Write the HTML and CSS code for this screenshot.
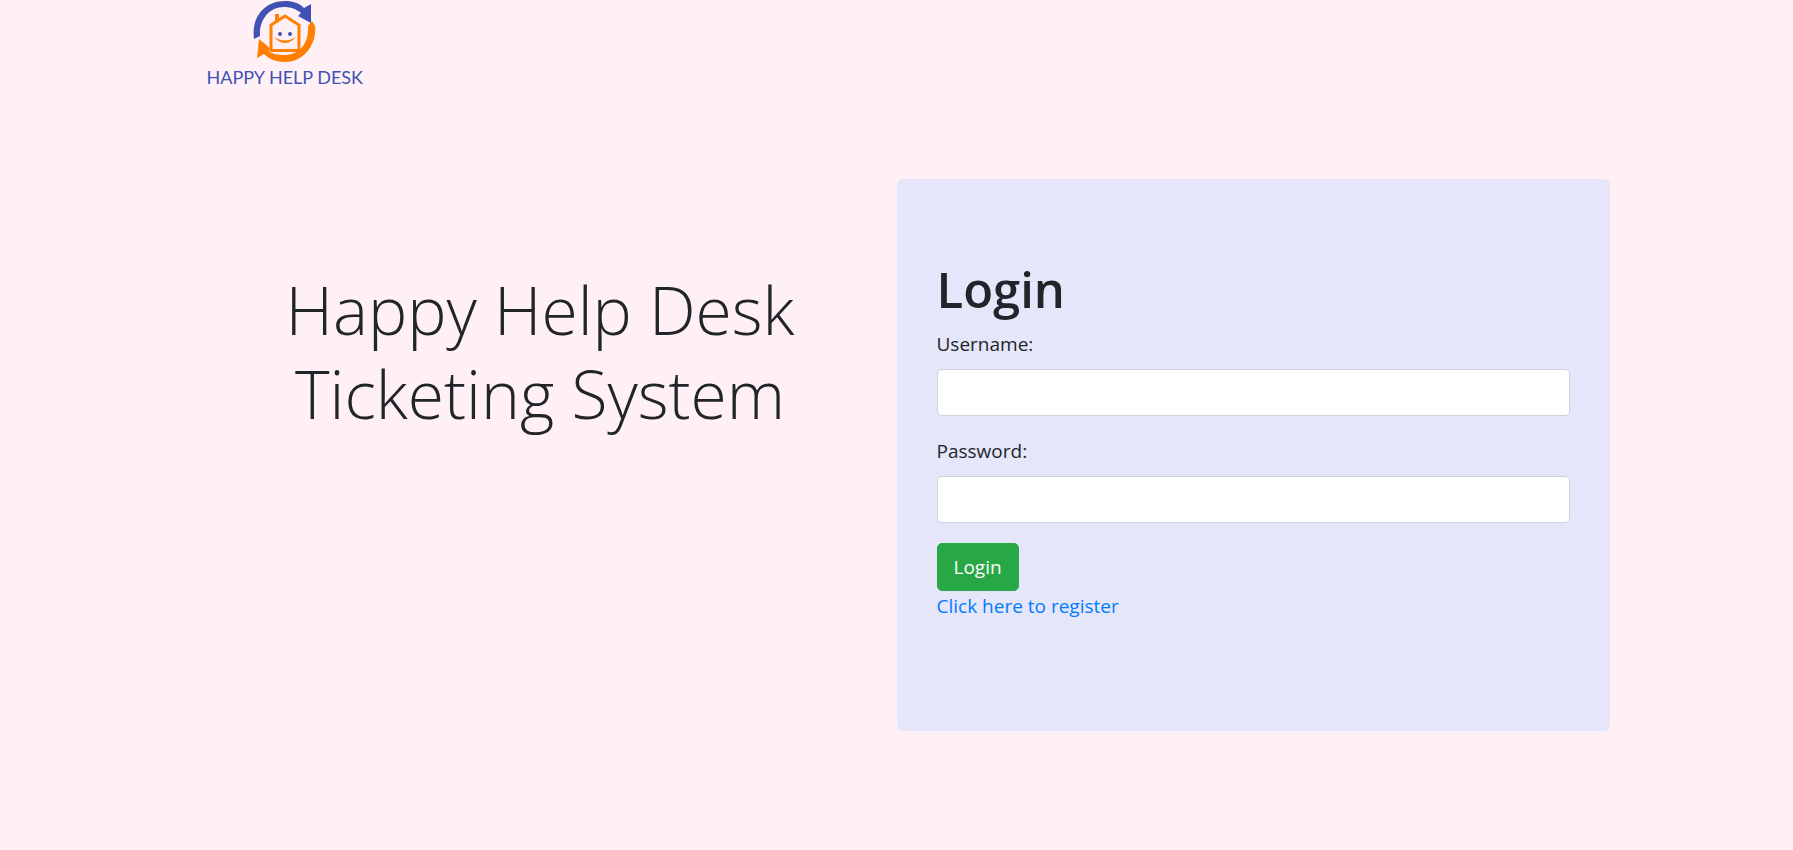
FILE: index.html
```html
<!DOCTYPE html>
<html lang="en">
<head>
<meta charset="utf-8">
<title>Happy Help Desk</title>
<link rel="stylesheet" href="styles.css">
</head>
<body>
<div class="container">
  <header class="header">
    <div class="logo">
      <svg class="logo-mark" viewBox="14 0 63 64" aria-hidden="true">
        <path fill="#3f51b5" d="M15 39C12 18 25 1 46 1C54 1 60 3 65 8L72 4L72 23L59 16L62 13C57 9 52 7 45 7C30 7 20 20 21 36Z"/>
        <path fill="#ff8000" d="M73 21L76 26C78 43 66 62 46 62C37 62 30 59 25 54L18 58L20 39L32 49L29 51C34 54 39 55 45 55C60 55 70 44 69 26Z"/>
        <path fill="none" stroke="#ff8000" stroke-width="3" d="M32 52V25L46 16L60 25V52M31 50.500H61"/>
        <path fill="#ff8000" d="M36 14H40V19L36 22Z"/>
        <circle cx="41" cy="34" r="2" fill="#3f51b5"/>
        <circle cx="51" cy="34" r="2" fill="#3f51b5"/>
        <path fill="#ff8000" d="M35 37Q46 44 57 37Q46 49 35 37Z"/>
      </svg>
      <span class="logo-name">HAPPY HELP DESK</span>
    </div>
  </header>
  <main class="row">
    <section class="intro">
      <h1 class="title">Happy Help Desk Ticketing System</h1>
    </section>
    <section class="card">
      <h2 class="card-title">Login</h2>
      <form>
        <div class="field">
          <label for="username">Username:</label>
          <input id="username" type="text" name="username">
        </div>
        <div class="field">
          <label for="password">Password:</label>
          <input id="password" type="password" name="password">
        </div>
        <button class="submit" type="submit">Login</button>
      </form>
      <a class="register" href="#register">Click here to register</a>
    </section>
  </main>
</div>
</body>
</html>
```
FILE: styles.css
```css
* { box-sizing: border-box; }
body {
  margin: 0;
  background: #fff0f5;
  color: #212529;
  font-family: "Open Sans", "Noto Sans", sans-serif;
  font-size: 19px;
  line-height: 30px;
}
.container { max-width: 1426px; margin: 0 auto; }
.header { padding: 0 23px; }
.logo {
  display: inline-flex;
  flex-direction: column;
  align-items: center;
  color: #3f51b5;
}
.logo-mark { display: block; width: 63px; height: 64px; }
.logo-name {
  font-family: Lato, sans-serif;
  font-size: 18px;
  line-height: 27px;
  white-space: nowrap;
}
.row {
  display: grid;
  grid-template-columns: 1fr 1fr;
  margin-top: 88px;
}
.intro { padding: 88px 80px 0; text-align: center; }
.title {
  margin: 0;
  font-size: 66px;
  line-height: 84px;
  font-weight: 300;
}
.card {
  padding: 80px 40px 110px;
  border-radius: 6px;
  background: #e6e6fa;
}
.card-title {
  margin: 0 0 10px;
  font-size: 49px;
  line-height: 60px;
  font-weight: 600;
}
.field { margin-bottom: 20px; }
label { display: block; margin-bottom: 10px; }
input {
  display: block;
  width: 100%;
  height: 47px;
  padding: 8px 15px;
  border: 1px solid #ced4da;
  border-radius: 5px;
  background: #fff;
  color: #495057;
  font: inherit;
}
.submit {
  display: block;
  height: 48px;
  padding: 8px 16px;
  border: 1px solid #28a745;
  border-radius: 5px;
  background: #28a745;
  color: #fff;
  font: inherit;
  cursor: pointer;
}
.register { color: #007bff; text-decoration: none; }
.register:hover { text-decoration: underline; }
@media (max-width: 900px) {
  .row { grid-template-columns: 1fr; gap: 40px; margin-top: 40px; }
  .intro { padding: 0 20px; }
}
```
